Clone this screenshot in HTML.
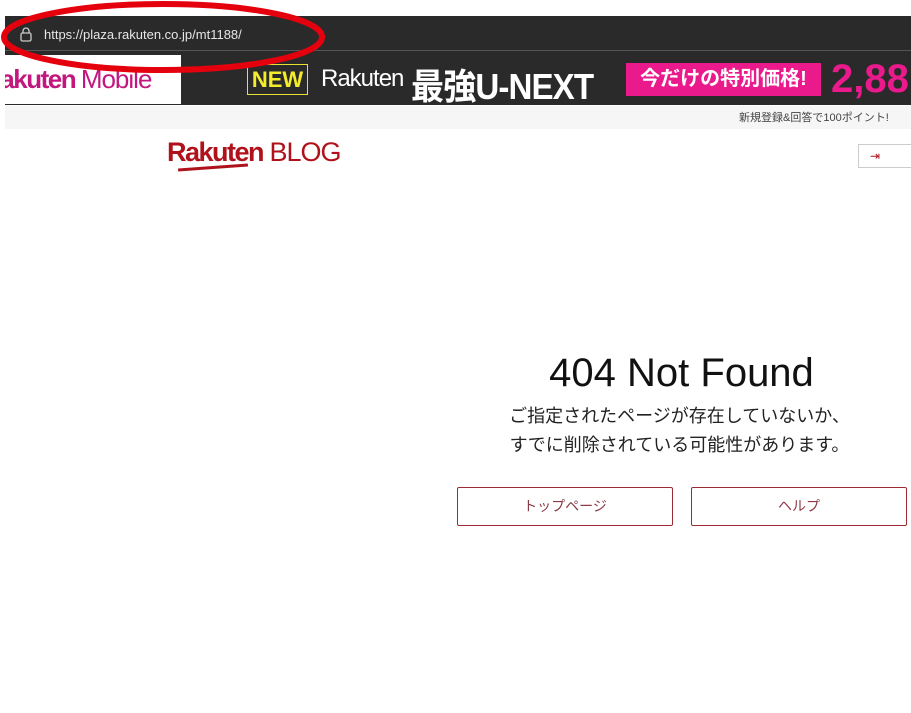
<!DOCTYPE html>
<html><head><meta charset="utf-8"><style>
body{margin:0;width:911px;height:713px;background:#fff;position:relative;overflow:hidden;font-family:"Liberation Sans","Noto Sans CJK JP",sans-serif}
.a{position:absolute}
</style></head><body>
<div class="a" style="left:5px;top:16px;width:906px;height:89px;background:#2a2a2a"></div>
<div class="a" style="left:5px;top:50px;width:906px;height:1px;background:#555"></div>
<svg class="a" style="left:19px;top:27px" width="14" height="15" viewBox="0 0 14 15"><rect x="2" y="6" width="10" height="8" rx="1.5" fill="none" stroke="#ccc" stroke-width="1.3"/><path d="M4 6V4a3 3 0 0 1 6 0v2" fill="none" stroke="#ccc" stroke-width="1.3"/></svg>
<div class="a" style="left:44px;top:27px;font-size:13px;color:#e6e6e6">https://plaza.rakuten.co.jp/mt1188/</div>
<div class="a" style="left:5px;top:55px;width:176px;height:49px;background:#fff;overflow:hidden"><div style="position:absolute;left:-22px;top:9px;font-size:26px;font-weight:bold;color:#c2177f;letter-spacing:-1.5px;white-space:nowrap">Rakuten <span style="font-weight:normal;letter-spacing:-1px">Mobile</span></div></div>
<div class="a" style="left:247px;top:64px;width:61px;height:31px;border:1px solid #e8e030;box-sizing:border-box;color:#f2ec2a;font-weight:bold;font-size:22px;text-align:center;line-height:29px">NEW</div>
<div class="a" style="left:321px;top:65px;color:#fff;font-size:24px;letter-spacing:-1px">Rakuten</div>
<div class="a" style="left:411px;top:58px;color:#fff;font-size:36px;font-weight:bold;letter-spacing:-1px;white-space:nowrap;transform:scaleX(0.92);transform-origin:left">最強U-NEXT</div>
<div class="a" style="left:626px;top:63px;width:195px;height:33px;background:#ea1a8c;color:#fff;font-size:20px;font-weight:bold;line-height:33px;text-align:center;white-space:nowrap">今だけの特別価格!</div>
<div class="a" style="left:831px;top:57px;color:#ea1a8c;font-size:40px;font-weight:bold;white-space:nowrap">2,88</div>
<div class="a" style="left:5px;top:106px;width:906px;height:23px;background:#f6f6f6"></div>
<div class="a" style="left:739px;top:109px;font-size:11px;color:#444;white-space:nowrap">新規登録&amp;回答で100ポイント!</div>
<div class="a" style="left:167px;top:137px;font-size:27px;font-weight:bold;color:#b0121b;letter-spacing:-1.5px;white-space:nowrap">Rakuten<span style="font-weight:normal;letter-spacing:-1px"> BLOG</span></div>
<div class="a" style="left:178px;top:166px;width:70px;height:3px;background:#b0121b;transform:rotate(-4deg)"></div>
<div class="a" style="left:858px;top:144px;width:60px;height:24px;border:1px solid #ccc;box-sizing:border-box"></div>
<div class="a" style="left:870px;top:149px;font-size:12px;color:#b0121b">⇥</div>
<div class="a" style="left:457px;top:351px;width:449px;text-align:center;font-size:40px;color:#111">404 Not Found</div>
<div class="a" style="left:455px;top:402px;width:449px;text-align:center;font-size:18px;color:#222;line-height:29px">ご指定されたページが存在していないか、<br>すでに削除されている可能性があります。</div>
<div class="a" style="left:457px;top:487px;width:216px;height:39px;border:1px solid #9c2b36;border-radius:2px;box-sizing:border-box;text-align:center;line-height:37px;font-size:14px;color:#8b3a45">トップページ</div>
<div class="a" style="left:691px;top:487px;width:216px;height:39px;border:1px solid #9c2b36;border-radius:2px;box-sizing:border-box;text-align:center;line-height:37px;font-size:14px;color:#8b3a45">ヘルプ</div>
<svg class="a" style="left:0;top:0" width="340" height="80"><ellipse cx="163" cy="37" rx="159" ry="33" fill="none" stroke="#e5000d" stroke-width="6"/></svg>
</body></html>
